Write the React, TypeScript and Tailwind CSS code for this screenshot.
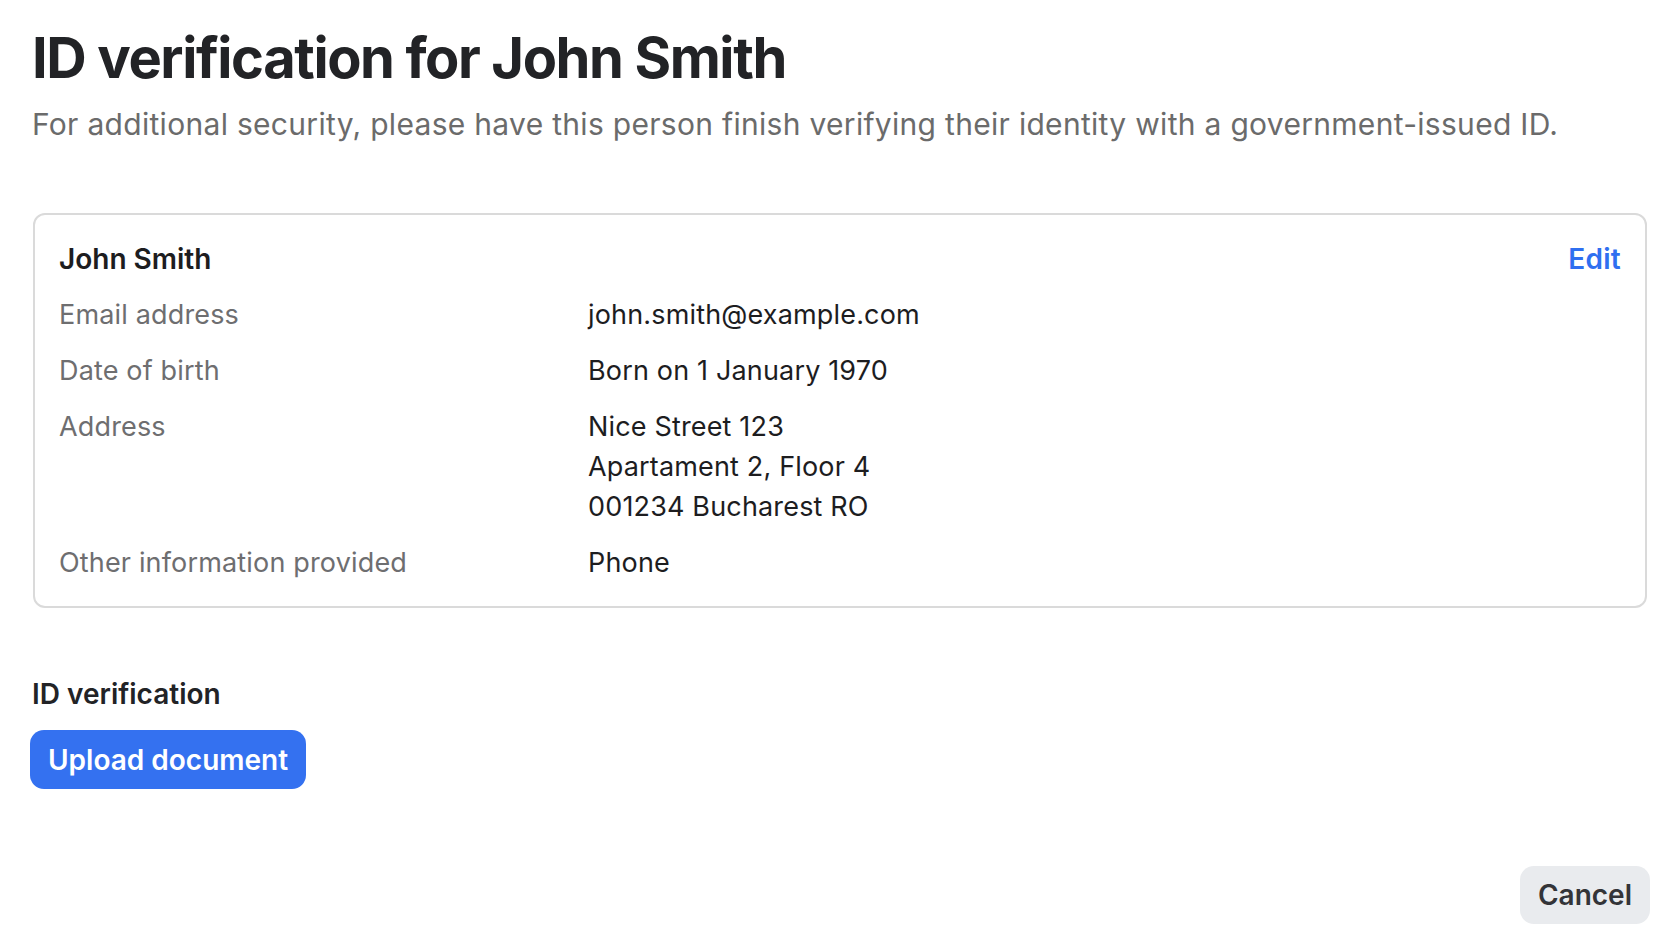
import React from "react";

const rows: { label: string; values: string[] }[] = [
  { label: "Email address", values: ["john.smith@example.com"] },
  { label: "Date of birth", values: ["Born on 1 January 1970"] },
  { label: "Address", values: ["Nice Street 123", "Apartament 2, Floor 4", "001234 Bucharest RO"] },
  { label: "Other information provided", values: ["Phone"] },
];

export default function App() {
  return (
    <div
      className="min-h-screen w-full bg-white flex flex-col pl-[30px] pr-[26px] pt-[24px]"
      style={{ fontFamily: "Inter, 'Noto Sans', sans-serif" }}
    >
      <h1 className="ml-[2px] text-[56px] leading-[68px] font-bold text-[#222326] tracking-[-0.025em]">
        ID verification for John Smith
      </h1>
      <p className="ml-[2px] mt-[12px] text-[30px] leading-[40px] text-[#6b6b6b] tracking-[0.01em]">
        For additional security, please have this person finish verifying their identity with a government-issued ID.
      </p>

      <div className="mt-[69px] ml-[3px] mr-[3px] border-2 border-[#dadada] rounded-[12px] px-[24px] pt-[24px] pb-[23px] flex flex-col gap-[16px]">
        <div className="flex justify-between items-center leading-[40px]">
          <span className="text-[28px] font-semibold text-[#1d1d1f]">John Smith</span>
          <a className="text-[28px] font-semibold text-[#2f6ff0] tracking-[0.01em]">Edit</a>
        </div>
        {rows.map((r) => (
          <div key={r.label} className="flex text-[27px] leading-[40px] tracking-[0.006em]">
            <div className="w-[529px] shrink-0 text-[#6e6e70]">{r.label}</div>
            <div className="flex flex-col text-[#1d1d1f]">
              {r.values.map((v) => (
                <span key={v}>{v}</span>
              ))}
            </div>
          </div>
        ))}
      </div>

      <h2 className="mt-[68px] ml-[2px] text-[28px] leading-[36px] font-semibold text-[#222326]">ID verification</h2>
      <div className="mt-[18px]">
        <button className="h-[59px] px-[18px] rounded-[14px] bg-[#3471f0] text-white text-[28px] font-semibold">
          Upload document
        </button>
      </div>

      <div className="mt-[77px] flex justify-end">
        <button className="h-[58px] px-[18px] rounded-[14px] bg-[#e9ebee] text-[#333438] text-[28px] font-semibold">
          Cancel
        </button>
      </div>
    </div>
  );
}
